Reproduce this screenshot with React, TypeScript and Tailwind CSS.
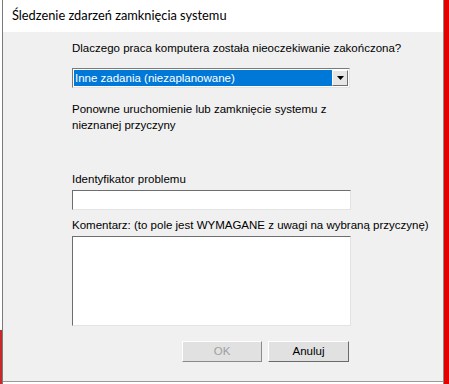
import React from "react";

const ui = { fontFamily: '"Liberation Sans", Arial, sans-serif' };

export default function App() {
  return (
    <div className="w-[449px] h-[384px] flex overflow-hidden bg-white" style={ui}>
      {/* left edge */}
      <div className="flex h-full">
        <div className="w-[2px] h-full flex flex-col">
          <div className="h-[330px] bg-white" />
          <div className="flex-1 bg-[#c8282a]" />
        </div>
        <div className="w-[1px] h-full bg-[#7a7a7a]" />
      </div>
      {/* main */}
      <div className="flex-1 flex flex-col h-full min-w-0">
        <div className="h-[32px] bg-white flex items-center pl-[9px] pb-[1px]">
          <span className="text-[12.8px] text-black" style={{ fontFamily: 'Lato, "Noto Sans", sans-serif' }}>
            Śledzenie zdarzeń zamknięcia systemu
          </span>
        </div>
        <div className="flex-1 bg-[#f0f0f0] pl-[69px] pt-[9px] text-[11.5px] leading-[15px] text-black flex flex-col whitespace-nowrap">
          <div>Dlaczego praca komputera została nieoczekiwanie zakończona?</div>
          <div className="mt-[12px] w-[278px] h-[20px] bg-white border border-t-[#7a7a7a] border-l-[#7a7a7a] border-r-[#e3e3e3] border-b-[#e3e3e3] flex p-[1px]">
            <div className="flex-1 bg-[#0078d7] text-white pl-[1px] flex items-center">
              Inne zadania (niezaplanowane)
            </div>
            <div className="w-[16px] h-full bg-[#e6e6e6] border border-t-white border-l-white border-r-[#6e6e6e] border-b-[#6e6e6e] flex items-center justify-center">
              <svg width="7" height="4" viewBox="0 0 7 4">
                <path d="M0 0h7L3.5 4z" fill="#000" />
              </svg>
            </div>
          </div>
          <div className="mt-[13px] leading-[16px]">
            Ponowne uruchomienie lub zamknięcie systemu z
            <br />
            nieznanej przyczyny
          </div>
          <div className="mt-[39px]">Identyfikator problemu</div>
          <div className="mt-[3px] w-[279px] h-[20px] bg-white border border-t-[#6e6e6e] border-l-[#6e6e6e] border-r-[#e3e3e3] border-b-[#e3e3e3]" />
          <div className="mt-[8px]">Komentarz: (to pole jest WYMAGANE z uwagi na wybraną przyczynę)</div>
          <div className="mt-[3px] w-[279px] h-[90px] bg-white border border-t-[#6e6e6e] border-l-[#6e6e6e] border-r-[#e3e3e3] border-b-[#e3e3e3]" />
          <div className="mt-[15px] flex gap-[6px] pl-[110px]">
            <div className="w-[80px] h-[21px] bg-[#e1e1e1] border border-t-white border-l-white border-r-[#8a8a8a] border-b-[#8a8a8a] flex items-center justify-center text-[#a0a0a0]">
              OK
            </div>
            <div className="w-[81px] h-[21px] bg-[#e1e1e1] border border-t-white border-l-white border-r-[#6a6a6a] border-b-[#6a6a6a] flex items-center justify-center">
              Anuluj
            </div>
          </div>
        </div>
        <div className="h-[1px] bg-[#9a9a9a]" />
        <div className="h-[2px] bg-white" />
      </div>
      {/* right edge */}
      <div className="flex h-full">
        <div className="w-[1px] h-full bg-[#8a8a8a]" />
        <div className="w-[5px] h-full bg-[#e50000]" />
      </div>
    </div>
  );
}
